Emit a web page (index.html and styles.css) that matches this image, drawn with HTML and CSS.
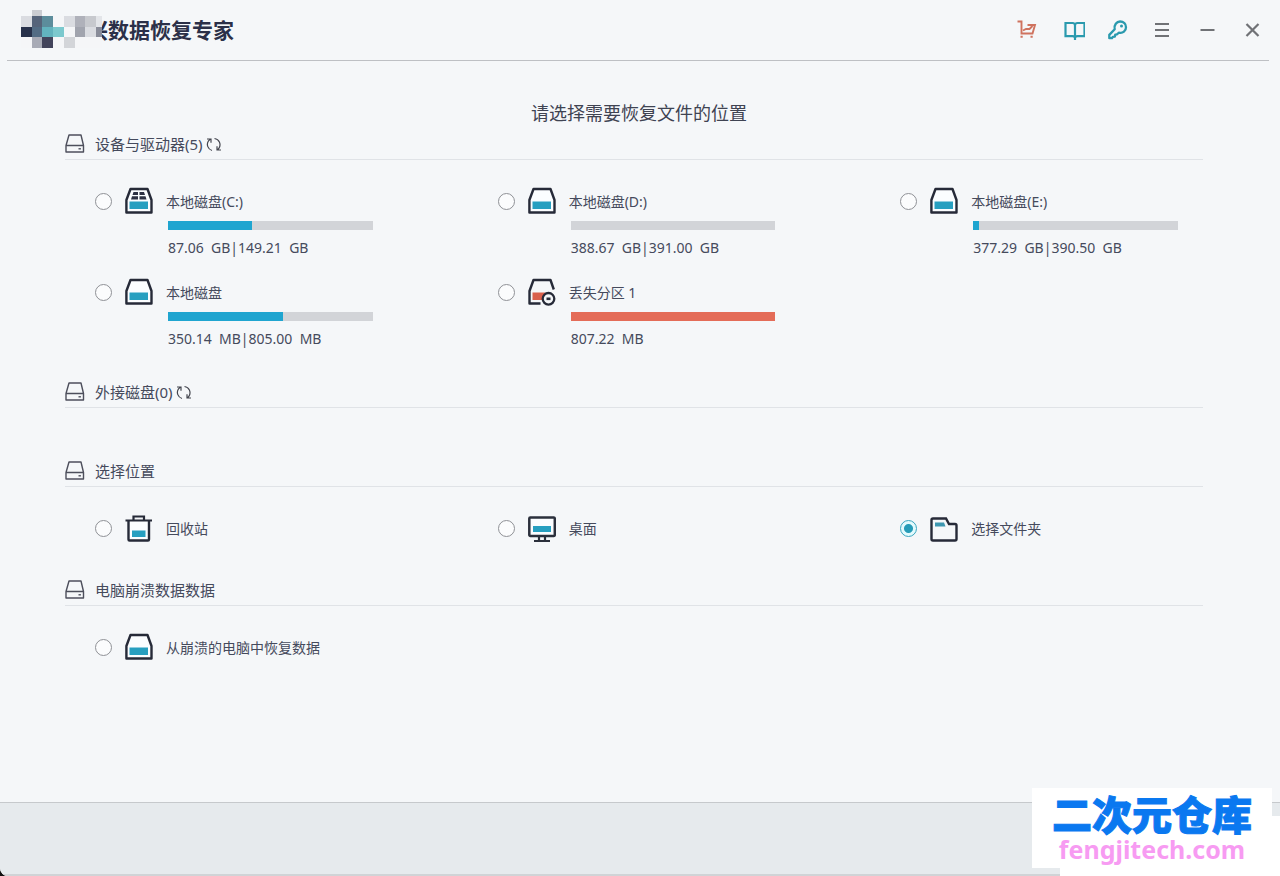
FILE: index.html
```html
<!DOCTYPE html>
<html lang="zh-CN">
<head>
<meta charset="utf-8">
<title>数据恢复专家</title>
<link rel="stylesheet" href="styles.css">
</head>
<body>
<svg class="defs" aria-hidden="true">
  <symbol id="drive-line" viewBox="0 0 20 20">
    <path d="M4 1h12l2.500 10.500v6.500H1v-6.500zM1 11.500h17.500" fill="none" stroke="#4d4f5c" stroke-width="1.400" stroke-linejoin="round"/>
    <path d="M13.500 14.800h2.400" stroke="#4d4f5c" stroke-width="1.400"/>
  </symbol>
  <symbol id="drive" viewBox="0 0 28 28">
    <path d="M5.500 2h17l4 11v12.500H1.400V13z" fill="#fbfdff" stroke="#262a38" stroke-width="2.400" stroke-linejoin="round"/>
    <path d="M4.500 14.500h18.500v7.500H4.500z" fill="#279fc0"/>
  </symbol>
  <symbol id="refresh" viewBox="0 0 16 16">
    <path d="M6 14.500C2 13.500 0 8.500 2.500 4.800L4.500 3M1 3h4v3.800M8.500 2.500c4.500.5 7 5.500 4.500 9.700L11.500 14M15 14h-4v-3.800" fill="none" stroke="#44464f" stroke-width="1.200"/>
  </symbol>
</svg>
<div class="app">
  <header class="topbar">
    <div class="brand">
      <h1 class="brand-name">兴数据恢复专家</h1>
      <svg class="mosaic" width="81" height="38" viewBox="0 0 81 38" shape-rendering="crispEdges" aria-hidden="true">
        <path d="M0 6h81v32H0z" fill="#f5f6f8"/>
        <path d="M11 0h10v6H11z" fill="#cbcdd2"/>
        <path d="M0 6h11v11H0zM43 6h11v11H43zM64 17h11v10H64z" fill="#dadce1"/>
        <path d="M11 6h10v11H11z" fill="#56647a"/>
        <path d="M21 6h11v11H21z" fill="#5c8d9c"/>
        <path d="M54 6h10v11H54z" fill="#afb1ba"/>
        <path d="M64 6h11v11H64z" fill="#c7c9ce"/>
        <path d="M75 6h6v11h-6z" fill="#e3e5e9"/>
        <path d="M0 17h11v10H0z" fill="#28324b"/>
        <path d="M11 17h10v10H11z" fill="#536c84"/>
        <path d="M21 17h11v10H21z" fill="#62b3be"/>
        <path d="M32 17h11v10H32z" fill="#7cc9ce"/>
        <path d="M54 17h10v10H54z" fill="#a1a4ae"/>
        <path d="M75 17h6v10h-6z" fill="#898c99"/>
        <path d="M11 27h10v11H11z" fill="#a8abb6"/>
        <path d="M21 27h11v11H21z" fill="#42445b"/>
        <path d="M43 27h11v11H43z" fill="#d3d5d9"/>
      </svg>
    </div>
    <nav class="tools" aria-label="工具栏">
      <button class="tool" aria-label="购买"><svg width="24" height="24" viewBox="0 0 24 24"><path d="M1.500 3.500h4v12h11l2.500-8.500h-7.500M7 12.500l3-1.500h3.500l3-3" fill="none" stroke="#cf735f" stroke-width="1.900"/><path d="M4.500 17.800h2.200v2H4.500zM14.500 17.800h2.200v2h-2.200z" fill="#cf735f"/></svg></button>
      <button class="tool" aria-label="教程"><svg width="24" height="24" viewBox="0 0 24 24"><path d="M4.500 5h7q2.500 0 2.500 2.500V20q0-1.800-2.500-1.800h-7zM23.500 5h-7Q14 5 14 7.500V20q0-1.800 2.500-1.800h7zM14 18v4" fill="none" stroke="#2a9aae" stroke-width="2.200"/></svg></button>
      <button class="tool" aria-label="注册"><svg width="24" height="24" viewBox="0 0 24 24"><path d="M8.700 11.200C7.800 6.800 10.700 3.500 14 3.500c3.600 0 6 2.600 6 5.700 0 3.700-3.200 6.500-7 5.500l-2.100 1.600-1.600.3-.5 2-2 .3-.8 1.300H3.300v-3.300z" fill="none" stroke="#2a9aae" stroke-width="2.300" stroke-linejoin="round"/><circle cx="15.500" cy="8" r="1.500" fill="#2a9aae"/></svg></button>
      <button class="tool" aria-label="菜单"><svg width="24" height="24" viewBox="0 0 24 24"><path d="M4 6h14M4 12h14M4 18h14" stroke="#707276" stroke-width="2"/></svg></button>
      <button class="tool" aria-label="最小化"><svg width="24" height="24" viewBox="0 0 24 24"><path d="M4.500 12h14" stroke="#707276" stroke-width="2"/></svg></button>
      <button class="tool" aria-label="关闭"><svg width="24" height="24" viewBox="0 0 24 24"><path d="M5.500 6l12 12M17.500 6l-12 12" stroke="#707276" stroke-width="2.200"/></svg></button>
    </nav>
  </header>

  <main class="content">
    <h2 class="prompt">请选择需要恢复文件的位置</h2>

    <section class="group">
      <h3 class="group-head"><svg class="head-icon"><use href="#drive-line"/></svg>设备与驱动器(5)<button class="refresh" aria-label="刷新设备"><svg width="16" height="16"><use href="#refresh"/></svg></button></h3>
      <div class="grid">
        <div class="card">
          <label class="option"><input class="radio" type="radio" name="place"><svg class="icon" viewBox="0 0 28 28"><use href="#drive"/><path d="M8.500 5h4.500v3H7.500zM14.500 5h4.500l1 3h-5.500zM7 9.300h6v3.200H6zM14.500 9.300h6l1 3.200h-7z" fill="#2c3042"/></svg>本地磁盘(C:)</label>
          <div class="bar"><div class="fill" style="width:41%"></div></div>
          <p class="stats">87.06  GB|149.21  GB</p>
        </div>
        <div class="card">
          <label class="option"><input class="radio" type="radio" name="place"><svg class="icon"><use href="#drive"/></svg>本地磁盘(D:)</label>
          <div class="bar"></div>
          <p class="stats">388.67  GB|391.00  GB</p>
        </div>
        <div class="card">
          <label class="option"><input class="radio" type="radio" name="place"><svg class="icon"><use href="#drive"/></svg>本地磁盘(E:)</label>
          <div class="bar"><div class="fill" style="width:3%"></div></div>
          <p class="stats">377.29  GB|390.50  GB</p>
        </div>
        <div class="card">
          <label class="option"><input class="radio" type="radio" name="place"><svg class="icon"><use href="#drive"/></svg>本地磁盘</label>
          <div class="bar"><div class="fill" style="width:56%"></div></div>
          <p class="stats">350.14  MB|805.00  MB</p>
        </div>
        <div class="card">
          <label class="option"><input class="radio" type="radio" name="place"><svg class="icon" viewBox="0 0 28 28"><path d="M4.500 14.500h13l-3 7.500H4.500z" fill="#d9604c"/><path d="M12.500 25.500H1.500V13L5.500 2h17l3.300 9.500" fill="none" stroke="#262a38" stroke-width="2.400" stroke-linejoin="round"/><circle cx="20.500" cy="20.800" r="5.800" fill="#f5f7f9" stroke="#262a38" stroke-width="2.300"/><path d="M18.500 19.500h4v2.600h-4z" fill="#262a38"/></svg>丢失分区 1</label>
          <div class="bar"><div class="fill lost" style="width:100%"></div></div>
          <p class="stats">807.22  MB</p>
        </div>
      </div>
    </section>

    <section class="group external">
      <h3 class="group-head"><svg class="head-icon"><use href="#drive-line"/></svg>外接磁盘(0)<button class="refresh" aria-label="刷新外接磁盘"><svg width="16" height="16"><use href="#refresh"/></svg></button></h3>
    </section>

    <section class="group places">
      <h3 class="group-head"><svg class="head-icon"><use href="#drive-line"/></svg>选择位置</h3>
      <div class="grid">
        <label class="option"><input class="radio" type="radio" name="place"><svg class="icon" viewBox="0 0 28 28"><path d="M3.500 7v18.500q0 1 1 1h18.500q1 0 1-1V7" fill="#fbfdff" stroke="#262a38" stroke-width="2.400"/><path d="M.500 6.500h26.500M8.500 6V2.500h10.500V6" fill="none" stroke="#262a38" stroke-width="2.200"/><path d="M7 16.500h13.500v6.500H7z" fill="#279fc0"/></svg>回收站</label>
        <label class="option"><input class="radio" type="radio" name="place"><svg class="icon" viewBox="0 0 28 28"><rect x="1.300" y="3.500" width="25.500" height="18.500" rx="1" fill="#fbfdff" stroke="#2b303c" stroke-width="2.500"/><path d="M5 12h18v6H5z" fill="#279fc0"/><path d="M11 22v5M17 22v5M6 27h16" stroke="#2b303c" stroke-width="2.200"/></svg>桌面</label>
        <label class="option"><input class="radio" type="radio" name="place" checked><svg class="icon" viewBox="0 0 28 28"><path d="M3 4.500h13l3 5.500h6q1.500 0 1.500 1.500V25q0 1.500-1.500 1.500H3Q1.500 26.500 1.500 25V6Q1.500 4.500 3 4.500z" fill="none" stroke="#262a38" stroke-width="2.400"/><path d="M5 8.500h9l1.500 4H5z" fill="#3d97b0"/></svg>选择文件夹</label>
      </div>
    </section>

    <section class="group">
      <h3 class="group-head"><svg class="head-icon"><use href="#drive-line"/></svg>电脑崩溃数据数据</h3>
      <div class="grid">
        <label class="option"><input class="radio" type="radio" name="place"><svg class="icon"><use href="#drive"/></svg>从崩溃的电脑中恢复数据</label>
      </div>
    </section>
  </main>

  <footer class="footer"></footer>
</div>
<div class="watermark-base"></div>
<div class="watermark">
  <strong class="watermark-name">二次元仓库</strong>
  <span class="watermark-site">fengjitech.com</span>
</div>
</body>
</html>
```

FILE: styles.css
```css
* { box-sizing: border-box; }

body {
  margin: 0;
  background: #111;
  color: #454a5c;
  font-family: "Noto Sans", "Noto Sans CJK SC", sans-serif;
}

h1, h2, h3, p { margin: 0; font-weight: 400; }

button {
  padding: 0;
  border: 0;
  background: none;
  cursor: pointer;
}

svg { display: block; flex: none; }

.defs { position: absolute; width: 0; height: 0; }

.app {
  display: flex;
  flex-direction: column;
  min-height: 100vh;
  background: #f5f7f9;
  border-radius: 0 0 0 8px;
  overflow: hidden;
}

.topbar {
  display: flex;
  align-items: center;
  justify-content: space-between;
  height: 61px;
  margin: 0 11px 0 7px;
  border-bottom: 1px solid #bec0c4;
}

.brand { position: relative; padding: 0 0 2px 80px; }

.brand-name {
  color: #2b3048;
  font-family: "Noto Sans CJK SC", sans-serif;
  font-size: 21px;
  font-weight: 700;
  line-height: 32px;
}

.mosaic { position: absolute; left: 14px; top: -3px; }

.tools { display: flex; margin-right: -6px; }

.tool {
  display: flex;
  align-items: center;
  justify-content: center;
  width: 45px;
  height: 40px;
}

.content { flex: 1; padding: 38px 77px 60px 65px; }

.prompt {
  margin-bottom: 2px;
  padding-left: 10px;
  color: #3f4352;
  font-size: 18px;
  line-height: 28px;
  text-align: center;
}

.group { padding-bottom: 28px; }
.external { padding-bottom: 48px; }
.places { padding-bottom: 33px; }

.group-head {
  display: flex;
  align-items: center;
  height: 31px;
  border-bottom: 1px solid #e0e3e7;
  font-size: 15px;
  line-height: 30px;
}

.head-icon { width: 20px; height: 20px; margin-right: 10px; }
.refresh { margin-left: 3px; }

.grid {
  display: grid;
  grid-template-columns: repeat(3, 1fr);
  gap: 20px 100px;
  padding: 27px 0 0 30px;
}

.option {
  display: flex;
  align-items: center;
  gap: 13px;
  height: 28px;
  font-size: 14px;
  white-space: nowrap;
}

.radio {
  appearance: none;
  flex: none;
  width: 17px;
  height: 17px;
  margin: 0;
  border: 1px solid #8f9196;
  border-radius: 50%;
  background: #fbfcfd;
}

.radio:checked {
  border-color: #3aa6bf;
  background: radial-gradient(circle, #259cb8 0 4px, #e2fafd 5px);
}

.icon { width: 28px; height: 28px; }

.bar {
  height: 9px;
  margin: 6px 25px 8px 73px;
  background: #d2d4d8;
}

.fill { height: 100%; background: #1fa5d0; }
.lost { background: #e46c58; }

.stats {
  padding-left: 73px;
  font-size: 14px;
  line-height: 20px;
  white-space: pre;
}

.footer {
  height: 74px;
  border-top: 1px solid #c6c9cc;
  border-bottom: 2px solid #d0d3d6;
  background: #e6eaed;
}

.watermark-base {
  position: fixed;
  right: 0;
  bottom: 0;
  width: 220px;
  height: 60px;
  background: #fff;
}

.watermark {
  position: fixed;
  right: 8px;
  bottom: 8px;
  display: flex;
  flex-direction: column;
  align-items: center;
  width: 240px;
  height: 80px;
  padding-top: 8px;
  background: #fff;
}

.watermark-name {
  color: #0a78f0;
  font-family: "Liberation Sans", "Noto Sans CJK SC", sans-serif;
  font-size: 40px;
  font-weight: 900;
  line-height: 40px;
  -webkit-text-stroke: 1px #0a78f0;
}

.watermark-site {
  color: #f79bf2;
  font-family: "Noto Sans", sans-serif;
  font-size: 25px;
  font-weight: 700;
  line-height: 26px;
}
```
